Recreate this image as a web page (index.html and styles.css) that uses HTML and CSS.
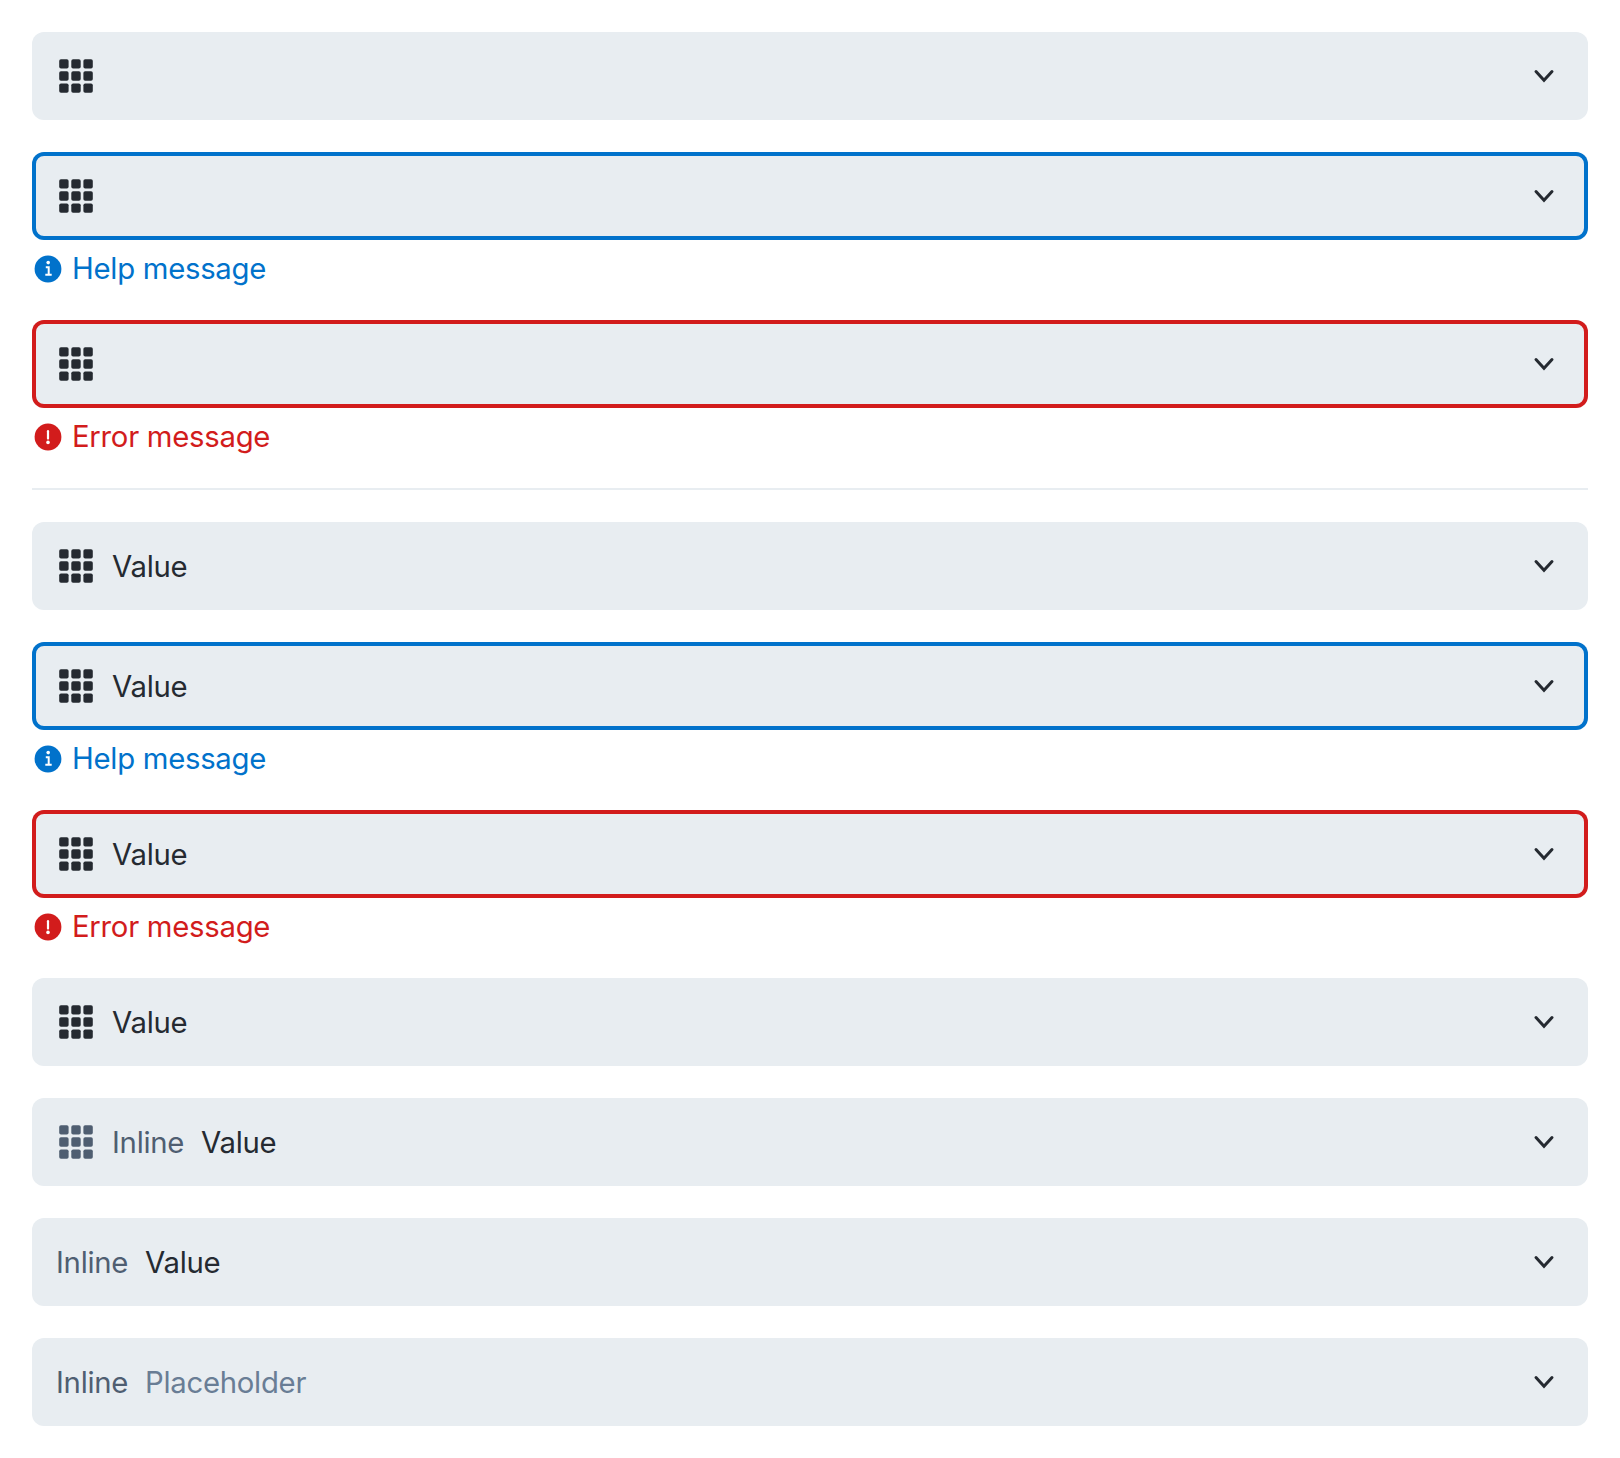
FILE: index.html
```html
<!DOCTYPE html>
<html lang="en">
<head>
<meta charset="utf-8">
<title>Select fields</title>
<link rel="stylesheet" href="styles.css">
</head>
<body>
<svg class="sprite" aria-hidden="true">
  <symbol id="grid" viewBox="0 0 40 40">
    <rect x="3.2" y="3.2" width="9.4" height="9.4" rx="1.8"/><rect x="15.3" y="3.2" width="9.4" height="9.4" rx="1.8"/><rect x="27.4" y="3.2" width="9.4" height="9.4" rx="1.8"/>
    <rect x="3.2" y="15.3" width="9.4" height="9.4" rx="1.8"/><rect x="15.3" y="15.3" width="9.4" height="9.4" rx="1.8"/><rect x="27.4" y="15.3" width="9.4" height="9.4" rx="1.8"/>
    <rect x="3.2" y="27.4" width="9.4" height="9.4" rx="1.8"/><rect x="15.3" y="27.4" width="9.4" height="9.4" rx="1.8"/><rect x="27.4" y="27.4" width="9.4" height="9.4" rx="1.8"/>
  </symbol>
  <symbol id="chevron" viewBox="0 0 32 32">
    <path d="M8 11.5L16 20.2L24 11.5" fill="none" stroke="currentColor" stroke-width="3" stroke-linecap="round" stroke-linejoin="miter"/>
  </symbol>
  <symbol id="info" viewBox="0 0 32 32">
    <circle cx="16" cy="16" r="13.4"/>
    <circle cx="16.2" cy="9.6" r="1.8" fill="#fff"/>
    <path d="M13.8 14.3H16.7V21.6M13.3 21.7H19.7" fill="none" stroke="#fff" stroke-width="2"/>
  </symbol>
  <symbol id="alert" viewBox="0 0 32 32">
    <circle cx="16" cy="16" r="13.4"/>
    <path d="M16 10.2V17.6" fill="none" stroke="#fff" stroke-width="2.2" stroke-linecap="round"/>
    <circle cx="16" cy="21.4" r="1.8" fill="#fff"/>
  </symbol>
</svg>
<main class="stack">
  <div class="field"><div class="select"><svg class="icon"><use href="#grid"/></svg><svg class="chevron"><use href="#chevron"/></svg></div></div>
  <div class="field help"><div class="select"><svg class="icon"><use href="#grid"/></svg><svg class="chevron"><use href="#chevron"/></svg></div>
    <div class="message"><svg class="status"><use href="#info"/></svg><span>Help message</span></div></div>
  <div class="field error"><div class="select"><svg class="icon"><use href="#grid"/></svg><svg class="chevron"><use href="#chevron"/></svg></div>
    <div class="message"><svg class="status"><use href="#alert"/></svg><span>Error message</span></div></div>
  <hr class="divider">
  <div class="field"><div class="select"><svg class="icon"><use href="#grid"/></svg><span class="value">Value</span><svg class="chevron"><use href="#chevron"/></svg></div></div>
  <div class="field help"><div class="select"><svg class="icon"><use href="#grid"/></svg><span class="value">Value</span><svg class="chevron"><use href="#chevron"/></svg></div>
    <div class="message"><svg class="status"><use href="#info"/></svg><span>Help message</span></div></div>
  <div class="field error"><div class="select"><svg class="icon"><use href="#grid"/></svg><span class="value">Value</span><svg class="chevron"><use href="#chevron"/></svg></div>
    <div class="message"><svg class="status"><use href="#alert"/></svg><span>Error message</span></div></div>
  <div class="field"><div class="select"><svg class="icon"><use href="#grid"/></svg><span class="value">Value</span><svg class="chevron"><use href="#chevron"/></svg></div></div>
  <div class="field"><div class="select"><svg class="icon muted"><use href="#grid"/></svg><span class="inline">Inline</span><span class="value">Value</span><svg class="chevron"><use href="#chevron"/></svg></div></div>
  <div class="field"><div class="select"><span class="inline">Inline</span><span class="value">Value</span><svg class="chevron"><use href="#chevron"/></svg></div></div>
  <div class="field"><div class="select"><span class="inline">Inline</span><span class="value placeholder">Placeholder</span><svg class="chevron"><use href="#chevron"/></svg></div></div>
</main>
</body>
</html>
```
FILE: styles.css
```css
* { box-sizing: border-box; }
body {
  margin: 0;
  background: #fff;
  color: #252a31;
  font-family: Inter, "Liberation Sans", sans-serif;
  font-size: 29.3px;
  font-weight: 380;
  line-height: 40px;
  letter-spacing: -0.27px;
}
svg { display: block; flex: none; fill: currentColor; }
.sprite { position: absolute; width: 0; height: 0; }
.stack { display: flex; flex-direction: column; gap: 32px; padding: 32px; }
.select {
  display: flex;
  align-items: center;
  height: 88px;
  padding: 0 24px;
  border-radius: 12px;
  background: #e8edf1;
}
.icon { width: 40px; height: 40px; margin-right: 16px; }
.muted, .inline { color: #4f5e71; }
.inline { width: 73px; margin-right: 16px; }
.inline, .value { padding-top: 2px; }
.placeholder { color: #697d95; }
.chevron { width: 32px; height: 32px; margin-left: auto; margin-right: 4px; }
.help .select { box-shadow: inset 0 0 0 4px #0172cb; }
.error .select { box-shadow: inset 0 0 0 4px #d21c1c; }
.message { display: flex; align-items: center; height: 48px; padding-top: 10px; }
.status { width: 32px; height: 32px; margin-right: 8px; }
.help .message { color: #0172cb; }
.error .message { color: #d21c1c; }
.divider { width: 100%; height: 2px; margin: 0; border: 0; background: #e8edf1; }
```
